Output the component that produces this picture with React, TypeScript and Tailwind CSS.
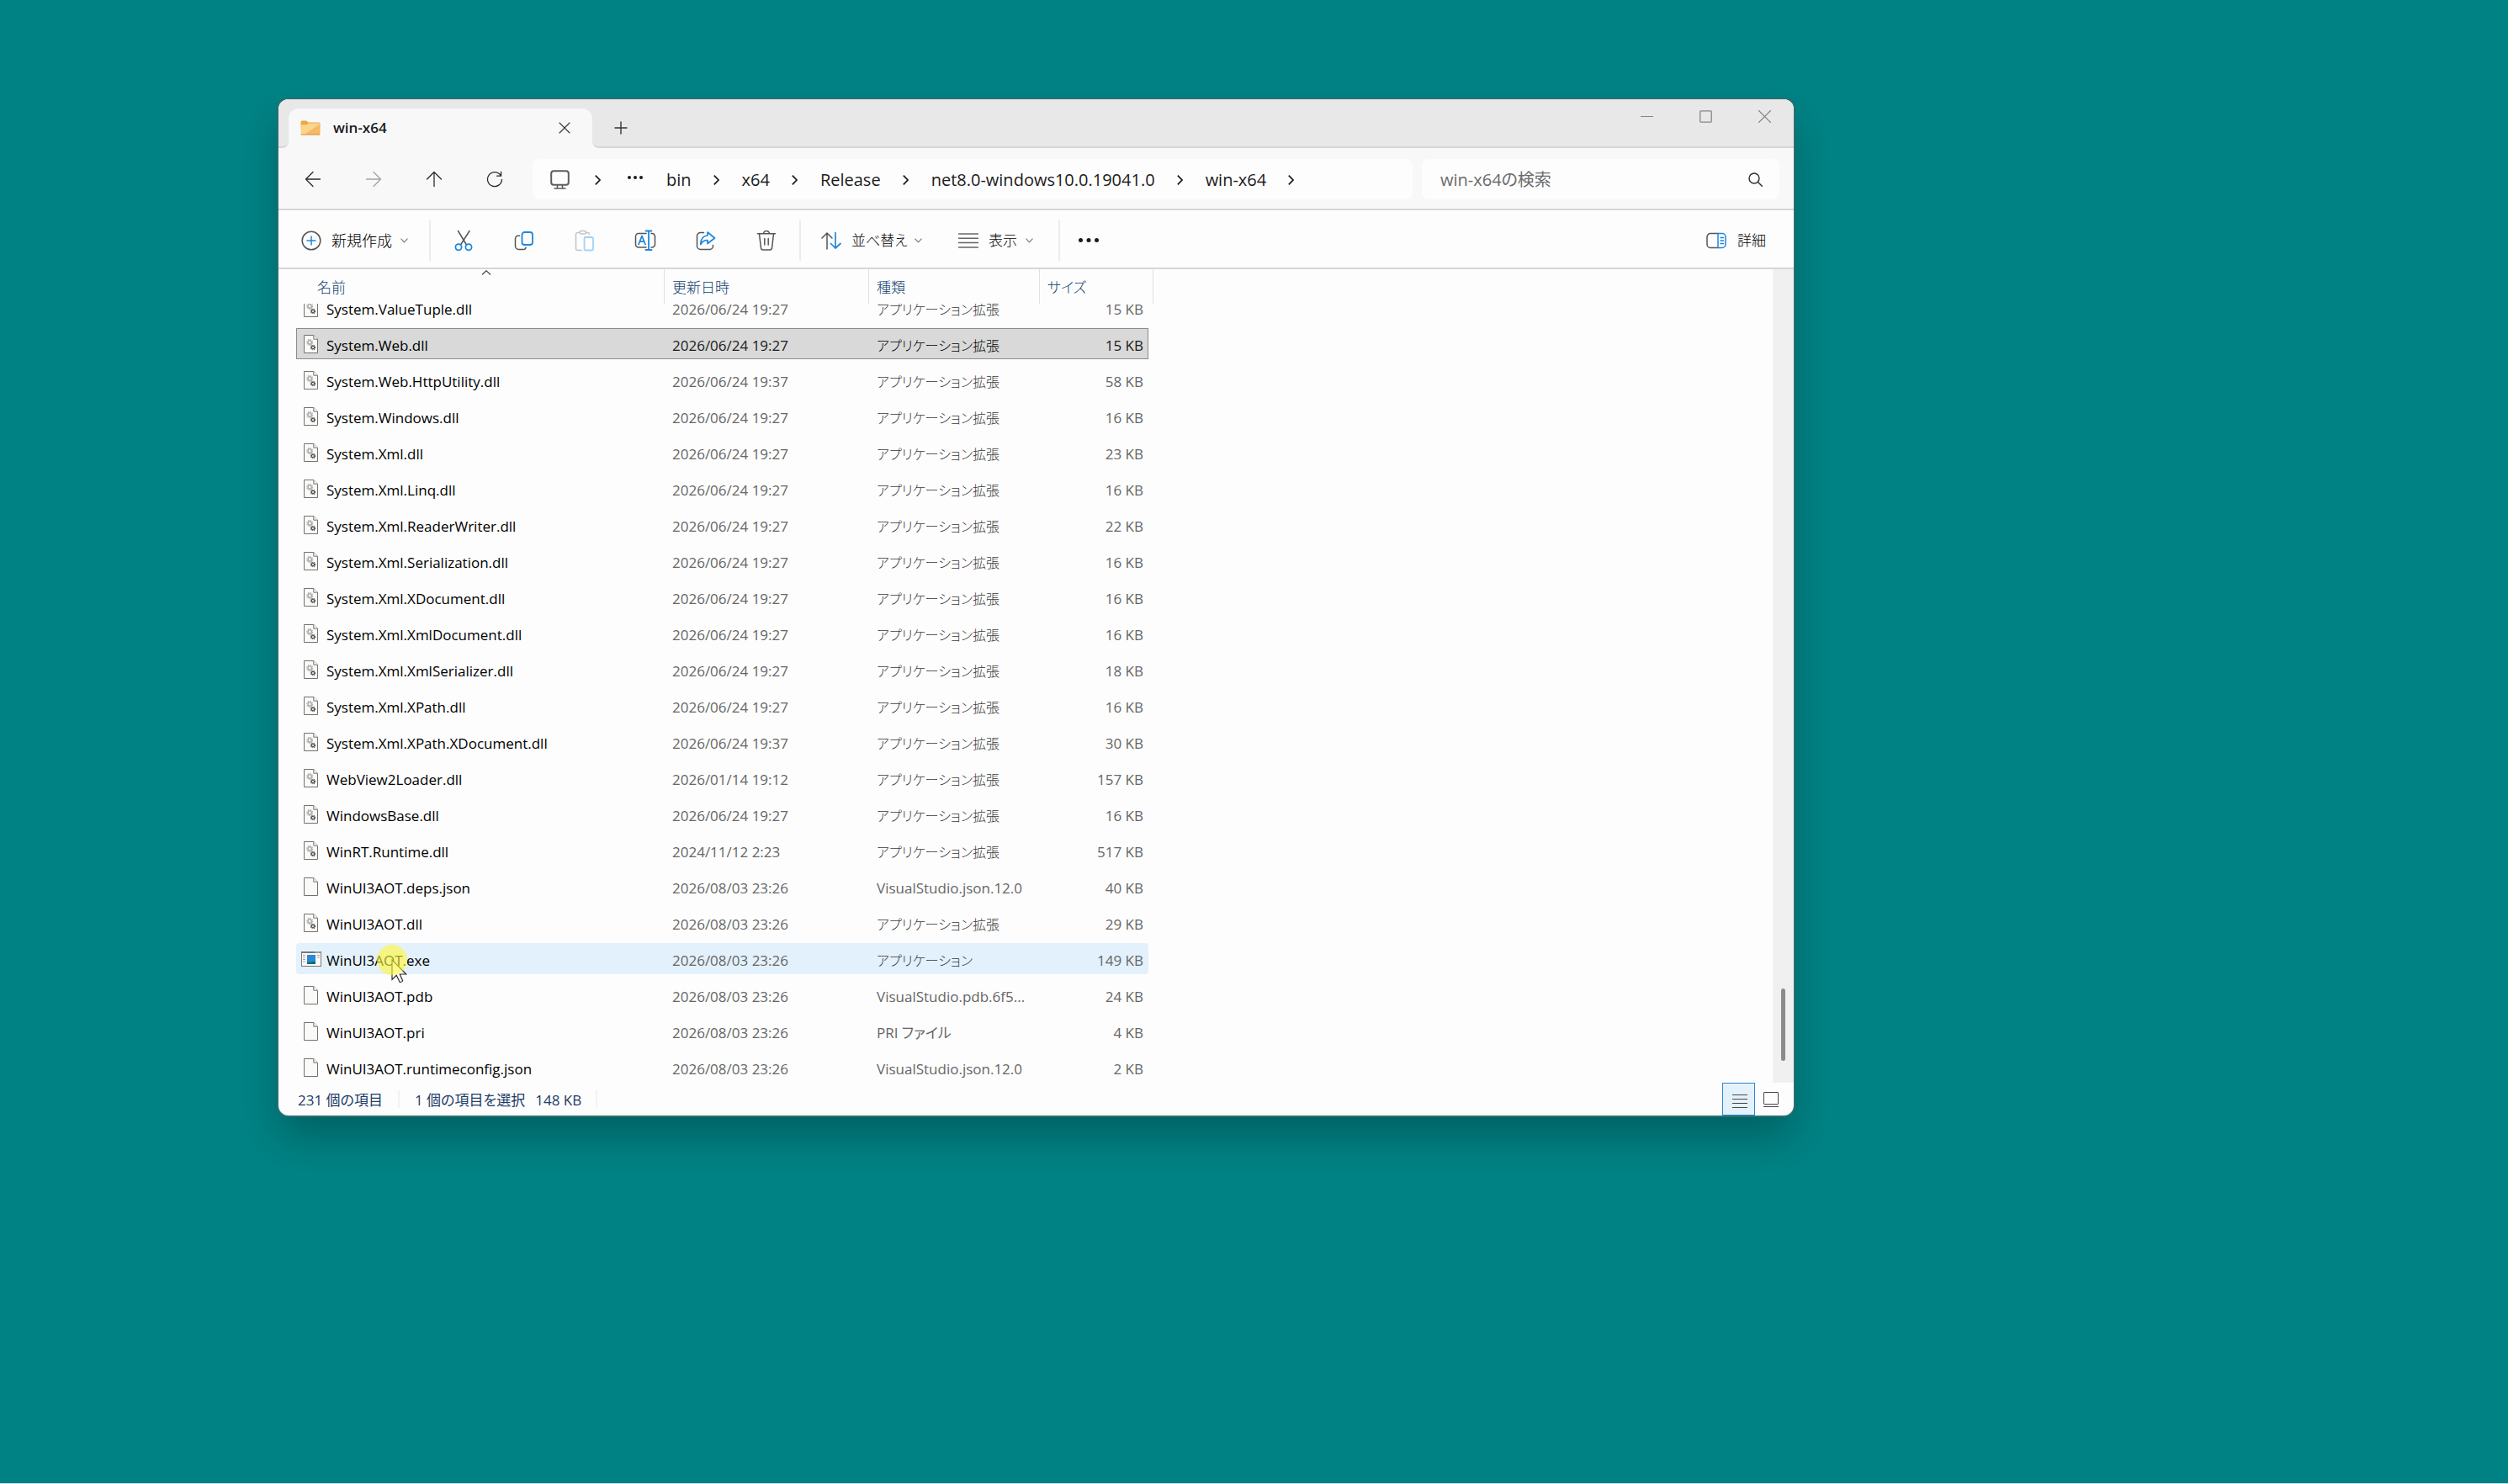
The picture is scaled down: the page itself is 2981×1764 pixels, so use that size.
import type { ReactNode } from "react";

type Kind = "dll" | "file" | "exe";
type FileRow = { name: string; date: string; type: string; size: string; kind: Kind };

const EXT = "アプリケーション拡張";

const dll = (name: string, date: string, size: string): FileRow => ({ name, date, type: EXT, size, kind: "dll" });
const file = (name: string, type: string, size: string): FileRow => ({
  name,
  date: "2026/08/03 23:26",
  type,
  size,
  kind: "file",
});

const files: FileRow[] = [
  dll("System.ValueTuple.dll", "2026/06/24 19:27", "15 KB"),
  dll("System.Web.dll", "2026/06/24 19:27", "15 KB"),
  dll("System.Web.HttpUtility.dll", "2026/06/24 19:37", "58 KB"),
  dll("System.Windows.dll", "2026/06/24 19:27", "16 KB"),
  dll("System.Xml.dll", "2026/06/24 19:27", "23 KB"),
  dll("System.Xml.Linq.dll", "2026/06/24 19:27", "16 KB"),
  dll("System.Xml.ReaderWriter.dll", "2026/06/24 19:27", "22 KB"),
  dll("System.Xml.Serialization.dll", "2026/06/24 19:27", "16 KB"),
  dll("System.Xml.XDocument.dll", "2026/06/24 19:27", "16 KB"),
  dll("System.Xml.XmlDocument.dll", "2026/06/24 19:27", "16 KB"),
  dll("System.Xml.XmlSerializer.dll", "2026/06/24 19:27", "18 KB"),
  dll("System.Xml.XPath.dll", "2026/06/24 19:27", "16 KB"),
  dll("System.Xml.XPath.XDocument.dll", "2026/06/24 19:37", "30 KB"),
  dll("WebView2Loader.dll", "2026/01/14 19:12", "157 KB"),
  dll("WindowsBase.dll", "2026/06/24 19:27", "16 KB"),
  dll("WinRT.Runtime.dll", "2024/11/12 2:23", "517 KB"),
  file("WinUI3AOT.deps.json", "VisualStudio.json.12.0", "40 KB"),
  dll("WinUI3AOT.dll", "2026/08/03 23:26", "29 KB"),
  { name: "WinUI3AOT.exe", date: "2026/08/03 23:26", type: "アプリケーション", size: "149 KB", kind: "exe" },
  file("WinUI3AOT.pdb", "VisualStudio.pdb.6f5...", "24 KB"),
  file("WinUI3AOT.pri", "PRI ファイル", "4 KB"),
  file("WinUI3AOT.runtimeconfig.json", "VisualStudio.json.12.0", "2 KB"),
];

const crumbs = ["bin", "x64", "Release", "net8.0-windows10.0.19041.0", "win-x64"];

const GRAY = "#555555";
const BLUE = "#1f86dc";

function Icon({ size = 24, width = 1.5, color = GRAY, children }: { size?: number; width?: number; color?: string; children: ReactNode }) {
  return (
    <svg
      width={size}
      height={size}
      viewBox={`0 0 ${size} ${size}`}
      fill="none"
      stroke={color}
      strokeWidth={width}
      strokeLinecap="round"
      strokeLinejoin="round"
      className="shrink-0"
      aria-hidden="true"
    >
      {children}
    </svg>
  );
}

function CrumbChevron() {
  return (
    <svg width="7" height="12" viewBox="0 0 7 12" fill="none" stroke="#1b1b1b" strokeWidth="1.7" className="shrink-0" aria-hidden="true">
      <path d="M.8.6 6 6 .8 11.4" />
    </svg>
  );
}

function DownChevron() {
  return (
    <svg width="9" height="6" viewBox="0 0 9 6" fill="none" stroke="#777" strokeWidth="1.1" className="shrink-0" aria-hidden="true">
      <path d="M.5.7 4.5 4.9 8.5.7" />
    </svg>
  );
}

function Dots({ gap, r, color }: { gap: number; r: number; color: string }) {
  const w = gap * 2 + r * 2;
  return (
    <svg width={w} height={r * 2} fill={color} className="shrink-0" aria-hidden="true">
      <circle cx={r} cy={r} r={r} />
      <circle cx={r + gap} cy={r} r={r} />
      <circle cx={r + gap * 2} cy={r} r={r} />
    </svg>
  );
}

function FolderIcon() {
  return (
    <svg width="24" height="18" viewBox="0 0 24 18" className="shrink-0" aria-hidden="true">
      <path d="M.5 2Q.5.4 2 .4h5.2L9.6 2.6H22Q23.4 2.6 23.4 4v4H.5Z" fill="#eba748" />
      <path d="M.5 5.2h7.2L10 3.4h13.4V16q0 1-1 1H1.5q-1 0-1-1Z" fill="#fad58c" />
      <path d="M23.4 4.6V16q0 1-1 1H4.5Z" fill="#f5b968" />
      <path d="M.8 17h22.4" stroke="#d98c2c" strokeWidth="1" />
    </svg>
  );
}

function Gear({ cx, cy, r, color, width, dash }: { cx: number; cy: number; r: number; color: string; width: number; dash: string }) {
  return (
    <g fill="none" stroke={color}>
      <circle cx={cx} cy={cy} r={r} strokeWidth={width} />
      <circle cx={cx} cy={cy} r={r + width * 0.8} strokeWidth={1.1} strokeDasharray={dash} />
    </g>
  );
}

function FileIcon({ kind }: { kind: Kind }) {
  if (kind === "exe") {
    return (
      <svg width="24" height="18" viewBox="0 0 24 18" aria-hidden="true">
        <rect x=".5" y=".5" width="23" height="17" fill="#fbfbfa" stroke="#7b7874" />
        <path d="M0 1h24" stroke="#7b7874" strokeWidth="2" />
        <path d="M17 1h1.5M19.5 1H21M21.8 1h1" stroke="#e8e8e8" />
        <path d="M2 4.5h3M2 7h3M2 9.5h3M2 12h3M19 4.5h3M19 7h3" stroke="#a5a29e" />
        <rect x="7" y="4" width="10" height="9" fill="#2b88d9" />
        <path d="M7 13q5-.4 10-1.5V15H7Z" fill="#0c6e66" />
      </svg>
    );
  }
  return (
    <svg width="17" height="22" viewBox="0 0 17 22" aria-hidden="true">
      <path d="M.5.5h11.3l4.7 4.7v16.3H.5Z" fill="#fafaf9" stroke="#75716d" />
      <path d="M11.8.5v4.7h4.7" fill="#fafaf9" stroke="#75716d" />
      {kind === "dll" && (
        <>
          <Gear cx={7.2} cy={9} r={2.2} color="#aeaeae" width={1.6} dash="1.5 1.2" />
          <Gear cx={11} cy={15} r={1.7} color="#565656" width={1.3} dash="1.2 1" />
        </>
      )}
    </svg>
  );
}

function Pointer() {
  return (
    <span className="pointer-events-none absolute top-[2px] left-[96px] z-10 block size-[36px]">
      <svg width="22" height="32" viewBox="0 0 22 32" className="absolute top-[17px] left-[17px]" aria-hidden="true">
        <path
          d="M1 1v23.5l5.2-5.2 4 8.2q2 .2 3.5-1.5l-3.5-8h7.6Z"
          fill="#fff"
          stroke="#222"
          strokeWidth="1.1"
        />
      </svg>
      <span className="absolute inset-0 rounded-full bg-[#fff832]/60" />
    </span>
  );
}

function TitleBar() {
  return (
    <div className="flex h-[58px] bg-[#f8f8f8]">
      <div className="w-3 rounded-br-lg border-b-2 border-[#d6d6d6] bg-[#e8e8e8]" />
      <div className="flex w-[361px] flex-col">
        <div className="h-[11px] bg-[#e8e8e8]" />
        <div className="flex-1 bg-linear-to-b from-[#e8e8e8] from-50% to-[#f8f8f8] to-50%">
          <div className="flex h-full items-center rounded-t-xl bg-[#f8f8f8] pr-[26px] pb-[2px] pl-[14px]">
            <FolderIcon />
            <span className="ml-[15px] flex-1 text-[17px] leading-6 font-semibold text-[#1b1b1b]">win-x64</span>
            <button type="button" aria-label="タブを閉じる">
              <Icon size={14} width={1.1} color="#333">
                <path d="m1 1 12 12M13 1 1 13" />
              </Icon>
            </button>
          </div>
        </div>
      </div>
      <div className="flex flex-1 justify-between rounded-bl-lg border-b-2 border-[#d6d6d6] bg-[#e8e8e8]">
        <button type="button" aria-label="新しいタブ" className="flex w-[67px] items-center justify-center pt-[12px]">
          <Icon size={16} width={1.4} color="#333">
            <path d="M8 1v14M1 8h14" />
          </Icon>
        </button>
        <div className="flex h-[41px]">
          <button type="button" aria-label="最小化" className="flex w-[70px] items-center justify-center">
            <Icon size={15} width={1} color="#858585">
              <path d="M0 7.5h15" />
            </Icon>
          </button>
          <button type="button" aria-label="最大化" className="flex w-[70px] items-center justify-center">
            <Icon size={15} width={1.3} color="#858585">
              <rect x=".8" y=".8" width="13.4" height="13.4" rx="1" />
            </Icon>
          </button>
          <button type="button" aria-label="閉じる" className="flex w-[70px] items-center justify-center">
            <Icon size={15} width={1.1} color="#858585">
              <path d="m.5.5 14 14M14.5.5l-14 14" />
            </Icon>
          </button>
        </div>
      </div>
    </div>
  );
}

function NavButton({ label, children, muted = false }: { label: string; children: ReactNode; muted?: boolean }) {
  return (
    <button type="button" aria-label={label} className="flex h-12 w-[72px] items-center justify-center">
      <Icon size={20} width={1.3} color={muted ? "#a3a3a3" : "#2b2b2b"}>
        {children}
      </Icon>
    </button>
  );
}

function NavBar() {
  return (
    <div className="flex h-[74px] items-center border-b-2 border-[#d6d6d6] bg-[#f8f8f8] pt-[2px] pr-[17px] pl-[5px]">
      <NavButton label="戻る">
        <path d="M18.5 10h-17M10 1.5 1.5 10l8.5 8.5" />
      </NavButton>
      <NavButton label="進む" muted>
        <path d="M1.5 10h17M10 1.5l8.5 8.5-8.5 8.5" />
      </NavButton>
      <NavButton label="上へ">
        <path d="M10 18.5v-17M1.5 10 10 1.5l8.5 8.5" />
      </NavButton>
      <NavButton label="更新">
        <path d="M18.5 10.5A8.500 8.500 0 1 1 16.8 5M17.6 1.2v5h-5" />
      </NavButton>
      <nav aria-label="パス" className="ml-[9px] flex h-12 flex-1 items-center rounded-lg bg-[#fdfdfd] pl-[21px]">
        <Icon size={23} width={2} color="#5c5c5c">
          <rect x="1.2" y="1.2" width="20.6" height="16.6" rx="3" />
          <path d="M8.5 18v3.5M14.5 18v3.5M5 22h13" strokeWidth="1.6" />
        </Icon>
        <span className="ml-[30px] flex items-center pt-[2px]">
          <CrumbChevron />
        </span>
        <button type="button" aria-label="その他" className="mr-[28px] ml-[32px] flex pb-1">
          <Dots gap={7} r={2} color="#1b1b1b" />
        </button>
        <ol className="flex items-center gap-[27px] pt-[2px] text-xl text-[#1b1b1b]">
          {crumbs.map((c) => (
            <li key={c} className="flex items-center gap-[26px]">
              <a href="#">{c}</a>
              <CrumbChevron />
            </li>
          ))}
        </ol>
      </nav>
      <label className="ml-[11px] flex h-12 w-[425px] items-center rounded-lg bg-[#fdfdfd] pr-[20px] pl-[22px]">
        <input
          type="search"
          aria-label="検索"
          placeholder="win-x64の検索"
          className="min-w-0 flex-1 bg-transparent pt-[2px] text-xl outline-none placeholder:text-[#6b6b6b]"
        />
        <Icon size={17} width={1.4} color="#2b2b2b">
          <circle cx="7" cy="7" r="6" />
          <path d="m11.5 11.5 4.8 4.8" />
        </Icon>
      </label>
    </div>
  );
}

function Divider() {
  return <span className="mx-[3px] h-12 w-[2px] bg-[#ececec]" />;
}

function Tool({ label, children }: { label: string; children: ReactNode }) {
  return (
    <button type="button" aria-label={label} className="flex h-12 w-[72px] items-center justify-center">
      {children}
    </button>
  );
}

function CommandBar() {
  return (
    <div className="flex h-[70px] items-center border-b-2 border-[#d6d6d6] pt-[3px] pr-[33px] text-[17px] text-black">
      <button type="button" className="flex h-12 w-[176px] items-center pl-[27px]">
        <Icon size={24}>
          <circle cx="12" cy="12" r="10.8" />
          <path d="M12 7v10M7 12h10" stroke={BLUE} />
        </Icon>
        <span className="ml-3 text-lg font-light">新規作成</span>
        <span className="ml-[10px]">
          <DownChevron />
        </span>
      </button>
      <Divider />
      <Tool label="切り取り">
        <Icon size={26}>
          <path d="M6.5 1.5 16.5 18M20 1.5 9.5 18" />
          <circle cx="7" cy="20.800" r="3.6" stroke={BLUE} strokeWidth="1.8" />
          <circle cx="19" cy="20.800" r="3.6" stroke={BLUE} strokeWidth="1.8" />
        </Icon>
      </Tool>
      <Tool label="コピー">
        <Icon size={24}>
          <path d="M6.5 6.2H5A3.5 3.5 0 0 0 1.500 9.700v8.800a4 4 0 0 0 4 4h5.800q2.200 0 2.700-2.200" />
          <rect x="9.5" y="2" width="12.5" height="15" rx="3" stroke={BLUE} strokeWidth="1.8" />
        </Icon>
      </Tool>
      <Tool label="貼り付け">
        <Icon size={26} color="#c4c4c4">
          <path d="M6.5 3.5H4.500a2 2 0 0 0-2 2v17a2 2 0 0 0 2 2h5M14.500 3.500h2a2 2 0 0 1 2 2" />
          <rect x="7" y="1.5" width="7.5" height="3.5" rx="1.7" />
          <rect x="12.5" y="9" width="10.5" height="15.5" rx="1.5" stroke="#9dd3fa" strokeWidth="1.8" />
        </Icon>
      </Tool>
      <Tool label="名前の変更">
        <Icon size={26}>
          <path d="M14 4.5H5A3.5 3.5 0 0 0 1.500 8v9.500A3.500 3.500 0 0 0 5 21h9M20 4.500h1A3.500 3.500 0 0 1 24.500 8v9.500A3.500 3.500 0 0 1 21 21h-1" />
          <path d="M13.5 1.5h7M17 1.5v22.5M13.5 24h7" stroke={BLUE} strokeWidth="1.8" />
          <path d="m5 17.5 4-10 4 10M6.5 14.2h5" stroke={BLUE} strokeWidth="1.8" />
        </Icon>
      </Tool>
      <Tool label="共有">
        <Icon size={24}>
          <path d="M9.5 2.5H5.500a4 4 0 0 0-4 4v12a4 4 0 0 0 4 4h11a4 4 0 0 0 4-4V17.500" />
          <path d="M14 2 22.500 9 14 15.500V11.500Q9 11.200 5.800 16.500 5.800 6.500 14 6Z" stroke={BLUE} strokeWidth="1.7" />
        </Icon>
      </Tool>
      <Tool label="削除">
        <Icon size={24}>
          <path d="M1.5 3.8h21M8.500 3.800a3.500 3.300 0 0 1 7 0M3.500 4l2 17a2.500 2.500 0 0 0 2.400 2h8.200a2.500 2.500 0 0 0 2.400-2l2-17M9.800 9.500v7.500M14.200 9.500v7.500" />
        </Icon>
      </Tool>
      <Divider />
      <button type="button" className="flex h-12 w-[163px] items-center pl-[21px]">
        <Icon size={24}>
          <path d="M7 22V3M1 9l6-6 6 6" />
          <path d="M17 2.5v18.5M11.500 15.500 17 21l6-5.500" stroke={BLUE} strokeWidth="1.7" />
        </Icon>
        <span className="mr-2 ml-3 font-light">並べ替え</span>
        <DownChevron />
      </button>
      <button type="button" className="flex h-12 w-[137px] items-center pl-[21px]">
        <Icon size={24} color="#666">
          <path d="M.5 4h23M.5 9.300h23M.5 14.600h23M.5 20h23" />
        </Icon>
        <span className="mr-[10px] ml-3 font-light">表示</span>
        <DownChevron />
      </button>
      <Divider />
      <button type="button" aria-label="もっと見る" className="flex h-12 w-[62px] items-center justify-center">
        <Dots gap={9.5} r={2.5} color="#1b1b1b" />
      </button>
      <button type="button" className="ml-auto flex h-12 items-center gap-[13px]">
        <Icon size={24}>
          <path d="M14 3.5H5A4 4 0 0 0 1 7.500v9a4 4 0 0 0 4 4h9" />
          <path d="M14 3.500h5a4 4 0 0 1 4 4v9a4 4 0 0 1-4 4h-5ZM17 8.500h3.500M17 12h3.500M17 15.500h3.500" stroke={BLUE} />
        </Icon>
        <span className="font-light">詳細</span>
      </button>
    </div>
  );
}

function HeaderCell({ children }: { children: ReactNode }) {
  return (
    <th scope="col" className="border-r border-[#e0e0e0] pl-[9px] text-left font-light">
      <button type="button" className="h-full pt-[2px]">
        {children}
      </button>
    </th>
  );
}

function FileTable() {
  return (
    <table className="ml-[21px] block flex-1 text-[17px] leading-6">
      <thead className="relative z-20 block bg-[#fdfdfd] text-[#123f70]">
        <tr className="grid h-[41px] grid-cols-[438px_243px_203px_135px]">
          <th scope="col" className="border-r border-[#e0e0e0] pl-[15px] text-left font-light">
            <button type="button" className="relative h-full w-full pt-[2px] pl-[10px] text-left">
              名前
              <svg
                width="11"
                height="6"
                viewBox="0 0 11 6"
                fill="none"
                stroke="#444"
                strokeWidth="1.2"
                className="absolute top-[1px] left-1/2 -translate-x-1/2"
                aria-hidden="true"
              >
                <path d="M.5 5.5 5.5.8l5 4.7" />
              </svg>
            </button>
          </th>
          <HeaderCell>更新日時</HeaderCell>
          <HeaderCell>種類</HeaderCell>
          <HeaderCell>サイズ</HeaderCell>
        </tr>
      </thead>
      <tbody className="-mt-[14px] flex flex-col gap-1.5 text-[#666666]">
        {files.map((f, i) => (
          <tr
            key={f.name}
            aria-selected={i === 1}
            className={
              "relative grid h-[37px] w-[1013px] grid-cols-[438px_243px_203px_129px] items-center " +
              (i === 1 ? "bg-[#d9d9d9] text-[#1b1b1b] inset-ring inset-ring-[#8c8c8c]" : f.kind === "exe" ? "rounded-sm bg-[#e3f1fc]" : "")
            }
          >
            <td className="flex items-center gap-1.5 pl-1.5 text-black">
              <span className="flex w-6 justify-center">
                <span className={f.kind === "exe" ? "" : "pr-[2px]"}>
                  <FileIcon kind={f.kind} />
                </span>
              </span>
              <span className="pt-1">{f.name}</span>
              {f.kind === "exe" && <Pointer />}
            </td>
            <td className="pt-1 pl-[9px]">{f.date}</td>
            <td
              className={
                "pt-1 pl-[9px] whitespace-nowrap " +
                (f.type.startsWith("アプリ") ? (i === 1 ? "text-base leading-6 font-light text-black" : "text-base leading-6 font-light text-[#3a3a3a]") : "")
              }
            >
              {f.type}
            </td>
            <td className="pt-1 pr-[6px] text-right">{f.size}</td>
          </tr>
        ))}
      </tbody>
    </table>
  );
}

function StatusBar() {
  return (
    <div className="flex h-[39px] items-center pr-2 pl-[23px] text-[17px] text-[#1e3a66]">
      <span className="pt-[2px]">231 個の項目</span>
      <span className="mx-[18px] h-[21px] w-[2px] bg-[#f2f2f2]" />
      <span className="pt-[2px]">1 個の項目を選択</span>
      <span className="ml-3 pt-[2px]">148 KB</span>
      <span className="mx-[17px] h-[21px] w-[2px] bg-[#f2f2f2]" />
      <button type="button" aria-label="詳細表示" className="ml-auto flex size-[39px] items-center justify-center border border-[#2f86cc] bg-[#e3f1fb] pl-[2px]">
        <svg width="18" height="17" stroke="#4c4548" strokeWidth="1" className="mt-1" aria-hidden="true">
          <path d="M0 1.5h18M0 6.5h18M0 11.5h18M0 16.5h18" />
        </svg>
      </button>
      <button type="button" aria-label="大アイコン" className="flex size-[38px] items-center justify-center">
        <svg width="18" height="18" fill="none" stroke="#4c4548" strokeWidth="1" aria-hidden="true">
          <rect x=".5" y=".5" width="17" height="14" rx=".5" />
          <path d="M0 17.5h18" />
        </svg>
      </button>
    </div>
  );
}

export default function App() {
  return (
    <div className="flex min-h-screen flex-col bg-[#008284] font-['Open_Sans','Noto_Sans_CJK_JP',sans-serif]" lang="ja">
      <main className="flex-1 pt-[118px] pr-[849px] pl-[331px]">
        <section
          aria-label="win-x64"
          className="overflow-hidden rounded-xl bg-[#fdfdfd] shadow-[0_0_0_2px_#2b6e70,0_26px_48px_-2px_rgba(0,0,0,0.26)] [font-feature-settings:'palt']"
        >
          <TitleBar />
          <NavBar />
          <CommandBar />
          <div className="flex">
            <FileTable />
            <div className="w-[25px] bg-[#f0f0f0] pt-[855px]">
              <div className="ml-[10px] h-[86px] w-[5px] rounded-full bg-[#8b8b8b]" />
            </div>
          </div>
          <StatusBar />
        </section>
      </main>
      <div className="h-px bg-[#cfe3e6]" />
    </div>
  );
}
